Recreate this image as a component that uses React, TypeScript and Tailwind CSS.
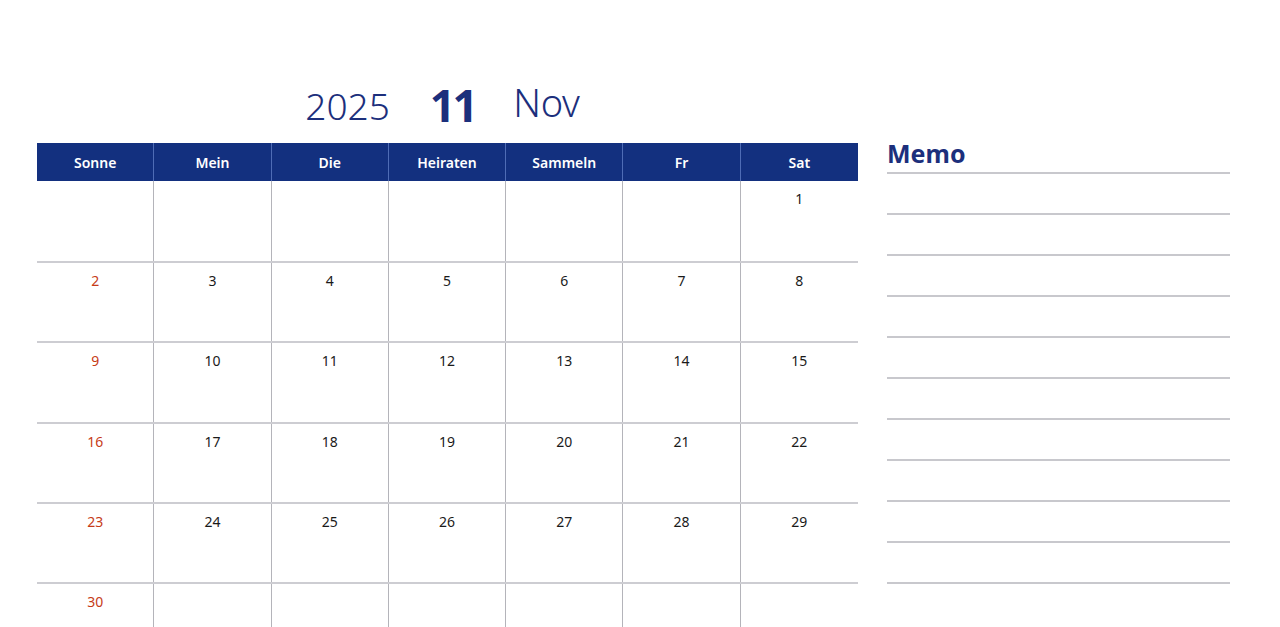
const days = ["Sonne", "Mein", "Die", "Heiraten", "Sammeln", "Fr", "Sat"];

const weeks: (number | null)[][] = [
  [null, null, null, null, null, null, 1],
  [2, 3, 4, 5, 6, 7, 8],
  [9, 10, 11, 12, 13, 14, 15],
  [16, 17, 18, 19, 20, 21, 22],
  [23, 24, 25, 26, 27, 28, 29],
  [30, null, null, null, null, null, null],
];

const rowHeights = ["h-[80px]", "h-[80px]", "h-[81px]", "h-[80px]", "h-[80px]", "h-[60px]"];

export default function App() {
  return (
    <div
      className="w-[1280px] h-[627px] overflow-hidden bg-white flex pl-[37px]"
      style={{ fontFamily: '"Noto Sans", "Open Sans", sans-serif' }}
    >
      <div className="w-[821px] shrink-0 flex flex-col">
        <div className="h-[143px] shrink-0 flex items-end justify-center pb-[18px] pr-[10px] text-[#1c2f7c]">
          <span className="text-[37px] font-light leading-none mr-[40px] mb-[1px]">2025</span>
          <span className="text-[45px] font-bold leading-none mr-[38px] -mb-[2px] tracking-[-3px]">11</span>
          <span className="text-[38px] font-light leading-none mb-[4px] tracking-[-0.3px]">Nov</span>
        </div>

        <div className="grid grid-cols-7 h-[38px] shrink-0 bg-[#13307f]">
          {days.map((d, i) => (
            <div
              key={d}
              className={`flex items-center justify-center text-white text-[14px] font-semibold pt-[1px] ${
                i < 6 ? "border-r border-[#4f6cb5]" : ""
              }`}
            >
              {d}
            </div>
          ))}
        </div>

        {weeks.map((week, r) => (
          <div
            key={r}
            className={`grid grid-cols-7 shrink-0 ${rowHeights[r]} ${r > 0 ? "border-t-2 border-[#cdcdd2]" : ""}`}
          >
            {week.map((n, c) => (
              <div
                key={c}
                className={`flex justify-center pt-[8px] text-[14px] leading-[20px] ${
                  c < 6 ? "border-r border-[#b4b4ba]" : ""
                } ${c === 0 ? "text-[#c63b17]" : "text-[#1a1a1a]"}`}
              >
                {n ?? ""}
              </div>
            ))}
          </div>
        ))}
      </div>

      <div className="w-[343px] shrink-0 ml-[29px] flex flex-col pt-[135px]">
        <div className="text-[25px] font-bold text-[#1c2f7c] leading-none h-[37px] flex items-center shrink-0">
          Memo
        </div>
        <div className="flex flex-col">
          {Array.from({ length: 11 }).map((_, i) => (
            <div
              key={i}
              className={`${i === 0 ? "h-[2px]" : "h-[41px]"} shrink-0 border-b-2 border-[#c8c8cd]`}
            />
          ))}
        </div>
      </div>
    </div>
  );
}
